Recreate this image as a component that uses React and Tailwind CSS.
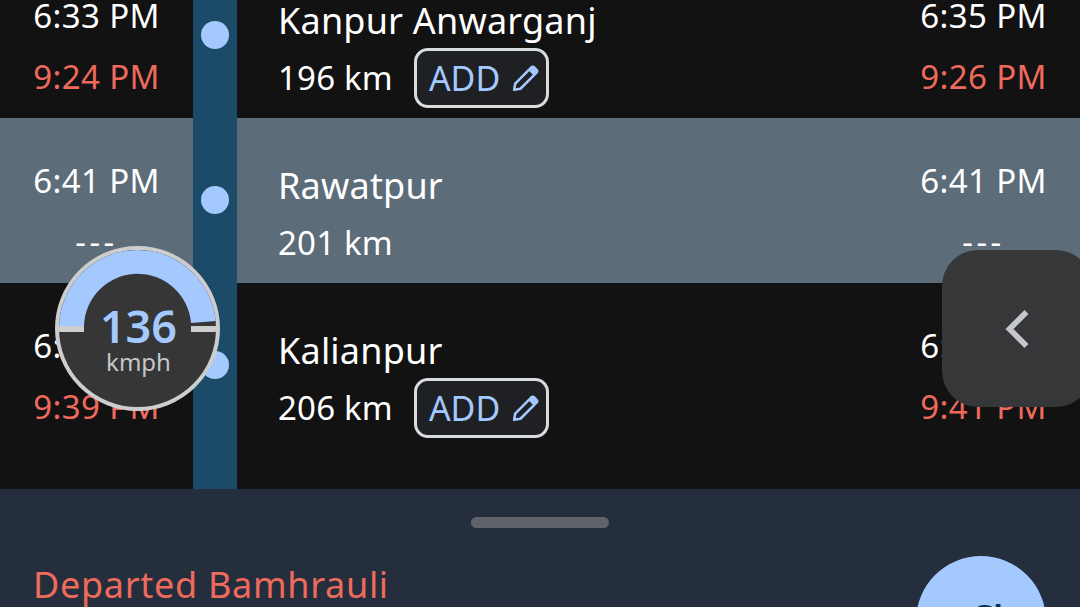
import { ChevronLeft } from "lucide-react";

const stations = [
  { name: "Kanpur Anwarganj", km: "196 km", arrive: "6:33 PM", arriveLate: "9:24 PM", depart: "6:35 PM", departLate: "9:26 PM", add: true },
  { name: "Rawatpur", km: "201 km", arrive: "6:41 PM", arriveLate: "---", depart: "6:41 PM", departLate: "---", active: true },
  { name: "Kalianpur", km: "206 km", arrive: "6:47 PM", arriveLate: "9:39 PM", depart: "6:49 PM", departLate: "9:41 PM", add: true },
];

const PencilIcon = () => (
  <svg width="29" height="29" viewBox="0 0 24 24" fill="none" stroke="#a3c9ff" strokeWidth="2.1" strokeLinejoin="round">
    <path d="M2.6 21.4l.9-5.2L15.2 4.5l4.3 4.3L7.8 20.5z" />
    <path d="M17 2.7a1.4 1.4 0 0 1 2 0l2.3 2.3a1.4 1.4 0 0 1 0 2l-1 1-4.3-4.3z" fill="#a3c9ff" />
  </svg>
);

const Times = ({ top, bottom }) => (
  <div className="flex flex-col items-center">
    <div className="h-[41px] text-[33px] leading-[41px] tracking-[0.4px] text-white">{top}</div>
    {bottom === "---" ? (
      <div className="mt-[20px] h-[41px] text-[33px] leading-[41px] tracking-[3.5px] text-white">{bottom}</div>
    ) : (
      <div className="mt-[20px] h-[41px] text-[33px] leading-[41px] tracking-[0.4px] text-[#ee6a5c]">{bottom}</div>
    )}
  </div>
);

const Row = ({ s }) => (
  <div className={`flex h-[165px] ${s.active ? "bg-[#5d6c79]" : "bg-[#121212]"}`}>
    <div className="w-[193px] shrink-0 pt-[42px]">
      <Times top={s.arrive} bottom={s.arriveLate} />
    </div>
    <div className="w-[44px] shrink-0 bg-[#1c4b69] flex justify-center pt-[68px]">
      <div className="w-[28px] h-[28px] rounded-full bg-[#a3c9ff]" />
    </div>
    <div className="flex-1 pl-[41px] pt-[44px]">
      <div className="h-[48px] text-[36px] leading-[48px] tracking-[0.2px] text-white">{s.name}</div>
      <div className="flex items-center mt-[3px] h-[60px]">
        <span className="text-[33px] tracking-[0.2px] text-white">{s.km}</span>
        {s.add && (
          <span className="ml-[21px] flex items-center gap-[11px] h-[60px] w-[135px] pl-[12px] rounded-[14px] border-[3px] border-[#d9dcdf] bg-[#1e2024] text-[34px] text-[#a3c9ff]">
            ADD
            <PencilIcon />
          </span>
        )}
      </div>
    </div>
    <div className="w-[193px] shrink-0 pt-[42px]">
      <Times top={s.depart} bottom={s.departLate} />
    </div>
  </div>
);

const Speedometer = () => (
  <div className="absolute left-[55px] top-[246px] w-[165px] h-[165px] rounded-full border-[4px] border-[#cdcdcd] bg-[#363636] overflow-hidden">
    <svg className="absolute inset-0" width="157" height="157" viewBox="0 0 157 157">
      <path d="M-5 76V-5H162V70.5L132 73A53.6 53.6 0 0 0 25 76Z" fill="#a3c9ff" />
      <rect x="0" y="76" width="25" height="6" fill="#cdcdcd" />
      <rect x="132" y="76" width="25" height="6" fill="#cdcdcd" />
    </svg>
    <div className="relative flex flex-col items-center pt-[52px] pl-[2px]">
      <div className="h-[48px] text-[45px] leading-[48px] font-semibold text-[#a3c9ff]">136</div>
      <div className="-mt-[3px] h-[30px] text-[24px] leading-[30px] text-[#c4c6cc]">kmph</div>
    </div>
  </div>
);

export default function App() {
  return (
    <div className="relative w-[1080px] h-[607px] overflow-hidden bg-[#121212] font-['Noto_Sans',sans-serif]">
      <div className="-mt-[47px]">
        {stations.map((s) => (
          <Row key={s.name} s={s} />
        ))}
        <div className="flex h-[41px]">
          <div className="w-[193px]" />
          <div className="w-[44px] bg-[#1c4b69]" />
        </div>
      </div>

      <div className="relative h-[118px] bg-[#252e3c] overflow-hidden">
        <div className="mx-auto mt-[28px] w-[138px] h-[11px] rounded-full bg-[#5f646b]" />
        <div className="pl-[33px] mt-[33px] text-[36px] leading-[48px] tracking-[0.7px] text-[#ee6a5c]">Departed Bamhrauli</div>
        <div className="absolute left-[916px] top-[67px] w-[130px] h-[130px] rounded-full bg-[#a3c9ff] pl-[54px] pt-[38px] text-[36px] leading-[48px] font-semibold text-[#0a3055]">
          Ch
        </div>
      </div>

      <Speedometer />

      <div className="absolute left-[942px] top-[250px] w-[150px] h-[157px] rounded-[36px] bg-[#363739] flex items-center pl-[42px]">
        <ChevronLeft size={68} color="#c4c6cc" strokeWidth={2} strokeLinecap="butt" strokeLinejoin="miter" />
      </div>
    </div>
  );
}
